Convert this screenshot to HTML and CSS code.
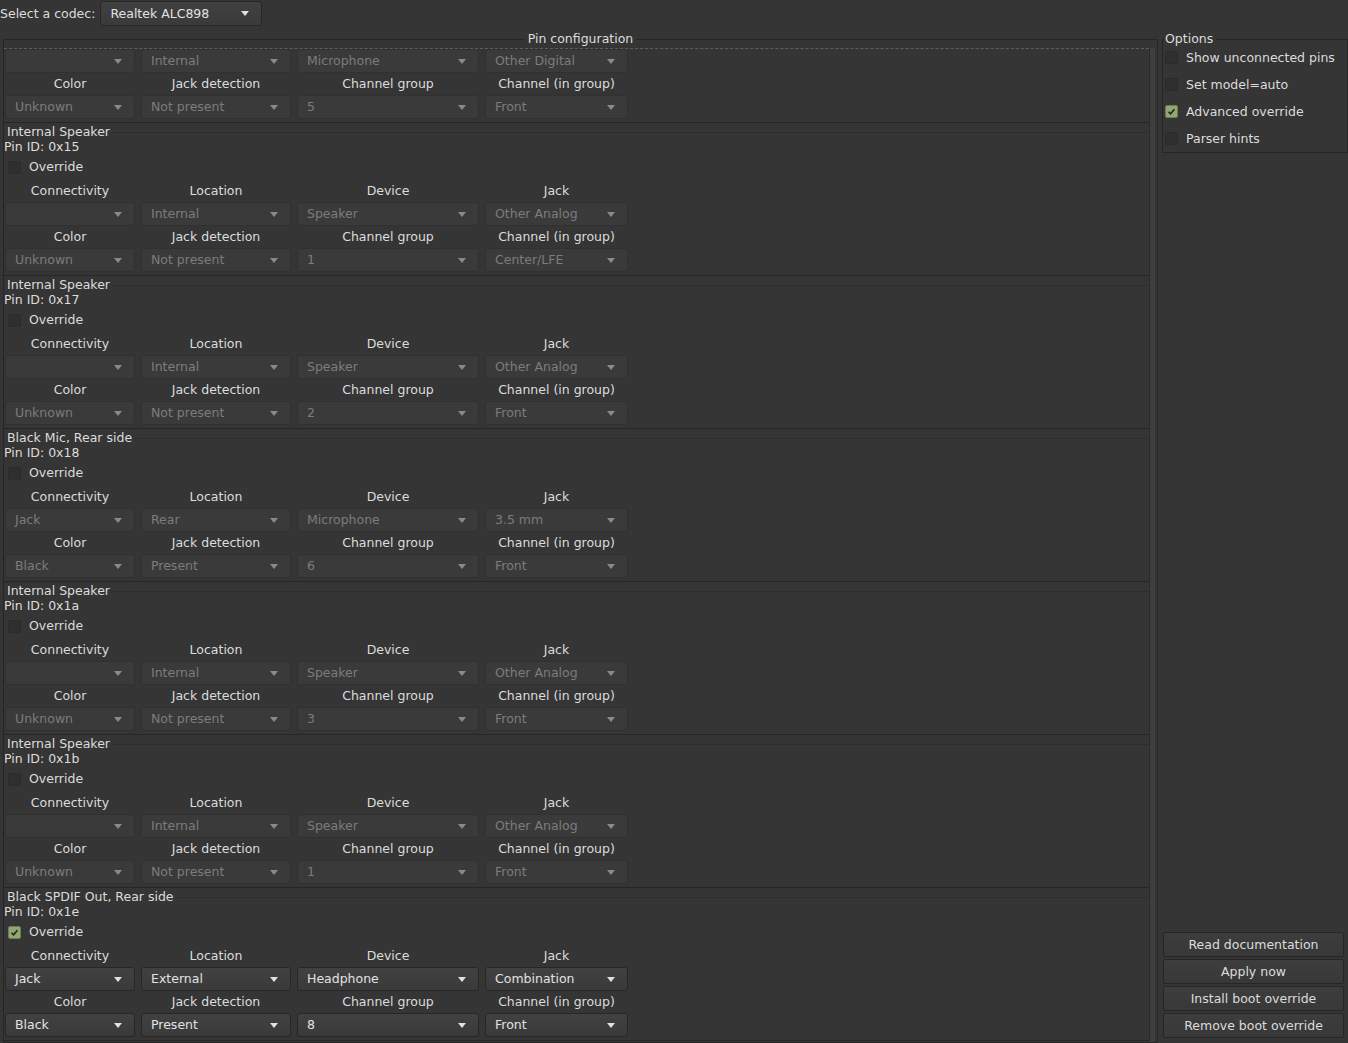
FILE: index.html
```html
<!DOCTYPE html>
<html>
<head>
<meta charset="utf-8">
<title>Pin configuration</title>
<link rel="stylesheet" href="styles.css">
</head>
<body>
<div class="topbar">
  <span class="codec-label">Select a codec:</span>
  <div class="combo combo-codec"><span>Realtek ALC898</span><i class="arrow"></i></div>
</div>
<div class="main">
  <div class="pins">
    <div class="group-title">
      <span class="gl gl-left"></span><span class="gt">Pin configuration</span><span class="gl gl-right"></span>
    </div>
    <div class="group-body">
      <div class="viewport">
        <div class="content">

          <section class="pin partial disabled">
            <div class="grid grid-partial">
              <div class="combo"><span></span><i class="arrow"></i></div>
              <div class="combo"><span>Internal</span><i class="arrow"></i></div>
              <div class="combo"><span>Microphone</span><i class="arrow"></i></div>
              <div class="combo"><span>Other Digital</span><i class="arrow"></i></div>
              <div class="lbl">Color</div><div class="lbl">Jack detection</div><div class="lbl">Channel group</div><div class="lbl">Channel (in group)</div>
              <div class="combo"><span>Unknown</span><i class="arrow"></i></div>
              <div class="combo"><span>Not present</span><i class="arrow"></i></div>
              <div class="combo"><span>5</span><i class="arrow"></i></div>
              <div class="combo"><span>Front</span><i class="arrow"></i></div>
            </div>
          </section>

          <section class="pin disabled">
            <div class="pin-head"><span class="pin-title">Internal Speaker</span><span class="pin-line"></span></div>
            <div class="pin-id">Pin ID: 0x15</div>
            <div class="check"><span class="box"></span>Override</div>
            <div class="grid">
              <div class="lbl top">Connectivity</div><div class="lbl top">Location</div><div class="lbl top">Device</div><div class="lbl top">Jack</div>
              <div class="combo"><span></span><i class="arrow"></i></div>
              <div class="combo"><span>Internal</span><i class="arrow"></i></div>
              <div class="combo"><span>Speaker</span><i class="arrow"></i></div>
              <div class="combo"><span>Other Analog</span><i class="arrow"></i></div>
              <div class="lbl">Color</div><div class="lbl">Jack detection</div><div class="lbl">Channel group</div><div class="lbl">Channel (in group)</div>
              <div class="combo"><span>Unknown</span><i class="arrow"></i></div>
              <div class="combo"><span>Not present</span><i class="arrow"></i></div>
              <div class="combo"><span>1</span><i class="arrow"></i></div>
              <div class="combo"><span>Center/LFE</span><i class="arrow"></i></div>
            </div>
          </section>

          <section class="pin disabled">
            <div class="pin-head"><span class="pin-title">Internal Speaker</span><span class="pin-line"></span></div>
            <div class="pin-id">Pin ID: 0x17</div>
            <div class="check"><span class="box"></span>Override</div>
            <div class="grid">
              <div class="lbl top">Connectivity</div><div class="lbl top">Location</div><div class="lbl top">Device</div><div class="lbl top">Jack</div>
              <div class="combo"><span></span><i class="arrow"></i></div>
              <div class="combo"><span>Internal</span><i class="arrow"></i></div>
              <div class="combo"><span>Speaker</span><i class="arrow"></i></div>
              <div class="combo"><span>Other Analog</span><i class="arrow"></i></div>
              <div class="lbl">Color</div><div class="lbl">Jack detection</div><div class="lbl">Channel group</div><div class="lbl">Channel (in group)</div>
              <div class="combo"><span>Unknown</span><i class="arrow"></i></div>
              <div class="combo"><span>Not present</span><i class="arrow"></i></div>
              <div class="combo"><span>2</span><i class="arrow"></i></div>
              <div class="combo"><span>Front</span><i class="arrow"></i></div>
            </div>
          </section>

          <section class="pin disabled">
            <div class="pin-head"><span class="pin-title">Black Mic, Rear side</span><span class="pin-line"></span></div>
            <div class="pin-id">Pin ID: 0x18</div>
            <div class="check"><span class="box"></span>Override</div>
            <div class="grid">
              <div class="lbl top">Connectivity</div><div class="lbl top">Location</div><div class="lbl top">Device</div><div class="lbl top">Jack</div>
              <div class="combo"><span>Jack</span><i class="arrow"></i></div>
              <div class="combo"><span>Rear</span><i class="arrow"></i></div>
              <div class="combo"><span>Microphone</span><i class="arrow"></i></div>
              <div class="combo"><span>3.5 mm</span><i class="arrow"></i></div>
              <div class="lbl">Color</div><div class="lbl">Jack detection</div><div class="lbl">Channel group</div><div class="lbl">Channel (in group)</div>
              <div class="combo"><span>Black</span><i class="arrow"></i></div>
              <div class="combo"><span>Present</span><i class="arrow"></i></div>
              <div class="combo"><span>6</span><i class="arrow"></i></div>
              <div class="combo"><span>Front</span><i class="arrow"></i></div>
            </div>
          </section>

          <section class="pin disabled">
            <div class="pin-head"><span class="pin-title">Internal Speaker</span><span class="pin-line"></span></div>
            <div class="pin-id">Pin ID: 0x1a</div>
            <div class="check"><span class="box"></span>Override</div>
            <div class="grid">
              <div class="lbl top">Connectivity</div><div class="lbl top">Location</div><div class="lbl top">Device</div><div class="lbl top">Jack</div>
              <div class="combo"><span></span><i class="arrow"></i></div>
              <div class="combo"><span>Internal</span><i class="arrow"></i></div>
              <div class="combo"><span>Speaker</span><i class="arrow"></i></div>
              <div class="combo"><span>Other Analog</span><i class="arrow"></i></div>
              <div class="lbl">Color</div><div class="lbl">Jack detection</div><div class="lbl">Channel group</div><div class="lbl">Channel (in group)</div>
              <div class="combo"><span>Unknown</span><i class="arrow"></i></div>
              <div class="combo"><span>Not present</span><i class="arrow"></i></div>
              <div class="combo"><span>3</span><i class="arrow"></i></div>
              <div class="combo"><span>Front</span><i class="arrow"></i></div>
            </div>
          </section>

          <section class="pin disabled">
            <div class="pin-head"><span class="pin-title">Internal Speaker</span><span class="pin-line"></span></div>
            <div class="pin-id">Pin ID: 0x1b</div>
            <div class="check"><span class="box"></span>Override</div>
            <div class="grid">
              <div class="lbl top">Connectivity</div><div class="lbl top">Location</div><div class="lbl top">Device</div><div class="lbl top">Jack</div>
              <div class="combo"><span></span><i class="arrow"></i></div>
              <div class="combo"><span>Internal</span><i class="arrow"></i></div>
              <div class="combo"><span>Speaker</span><i class="arrow"></i></div>
              <div class="combo"><span>Other Analog</span><i class="arrow"></i></div>
              <div class="lbl">Color</div><div class="lbl">Jack detection</div><div class="lbl">Channel group</div><div class="lbl">Channel (in group)</div>
              <div class="combo"><span>Unknown</span><i class="arrow"></i></div>
              <div class="combo"><span>Not present</span><i class="arrow"></i></div>
              <div class="combo"><span>1</span><i class="arrow"></i></div>
              <div class="combo"><span>Front</span><i class="arrow"></i></div>
            </div>
          </section>

          <section class="pin">
            <div class="pin-head"><span class="pin-title">Black SPDIF Out, Rear side</span><span class="pin-line"></span></div>
            <div class="pin-id">Pin ID: 0x1e</div>
            <div class="check"><span class="box checked"><svg viewBox="0 0 13 13" width="13" height="13"><path d="M3 6.8 L5.4 9.2 L10 3.8" fill="none" stroke="#1c2614" stroke-width="1.8"/></svg></span>Override</div>
            <div class="grid">
              <div class="lbl top">Connectivity</div><div class="lbl top">Location</div><div class="lbl top">Device</div><div class="lbl top">Jack</div>
              <div class="combo"><span>Jack</span><i class="arrow"></i></div>
              <div class="combo"><span>External</span><i class="arrow"></i></div>
              <div class="combo"><span>Headphone</span><i class="arrow"></i></div>
              <div class="combo"><span>Combination</span><i class="arrow"></i></div>
              <div class="lbl">Color</div><div class="lbl">Jack detection</div><div class="lbl">Channel group</div><div class="lbl">Channel (in group)</div>
              <div class="combo"><span>Black</span><i class="arrow"></i></div>
              <div class="combo"><span>Present</span><i class="arrow"></i></div>
              <div class="combo"><span>8</span><i class="arrow"></i></div>
              <div class="combo"><span>Front</span><i class="arrow"></i></div>
            </div>
          </section>

        </div>
      </div>
      <div class="vbar"></div>
    </div>
  </div>

  <div class="side">
    <div class="options">
      <div class="group-title">
        <span class="gl gl-left gl-stub"></span><span class="gt gt-left">Options</span><span class="gl gl-right"></span>
      </div>
      <div class="options-body">
        <div class="check opt"><span class="box"></span>Show unconnected pins</div>
        <div class="check opt"><span class="box"></span>Set model=auto</div>
        <div class="check opt"><span class="box checked"><svg viewBox="0 0 13 13" width="13" height="13"><path d="M3 6.8 L5.4 9.2 L10 3.8" fill="none" stroke="#1c2614" stroke-width="1.8"/></svg></span>Advanced override</div>
        <div class="check opt"><span class="box"></span>Parser hints</div>
      </div>
    </div>
    <div class="buttons">
      <div class="btn">Read documentation</div>
      <div class="btn">Apply now</div>
      <div class="btn">Install boot override</div>
      <div class="btn">Remove boot override</div>
    </div>
  </div>
</div>
</body>
</html>
```

FILE: styles.css
```css
html, body {
  margin: 0;
  padding: 0;
}
body {
  width: 1348px;
  height: 1043px;
  overflow: hidden;
  background: #353535;
  color: #dcdcdc;
  font-family: "DejaVu Sans", "Liberation Sans", sans-serif;
  font-size: 12.5px;
  line-height: 15px;
}

/* ---------- top bar ---------- */
.topbar {
  display: flex;
  align-items: center;
  gap: 5px;
  height: 25px;
  padding-top: 1px;
}
.combo-codec {
  width: 162px;
  height: 25px;
  color: #dcdcdc;
}

/* ---------- combo boxes ---------- */
.combo {
  box-sizing: border-box;
  display: flex;
  align-items: center;
  justify-content: space-between;
  padding: 0 12px 1px 9px;
  background: linear-gradient(#414141, #3a3a3a);
  border: 1px solid #272727;
  border-radius: 3px;
  color: #e2e2e2;
  white-space: nowrap;
}
.arrow {
  display: block;
  width: 0;
  height: 0;
  margin-top: 1px;
  border-left: 4.5px solid transparent;
  border-right: 4.5px solid transparent;
  border-top: 5px solid #e0e0e0;
}
.disabled .combo {
  background: #3a3a3a;
  border-color: #313131;
  color: #7c7c7c;
}
.disabled .arrow {
  border-top-color: #8a8a8a;
}

/* ---------- layout ---------- */
.main {
  display: flex;
  gap: 4px;
  padding-left: 3px;
  margin-top: 5px;
  height: 1012px;
}

.group-title {
  display: flex;
  height: 17px;
}
.gl {
  flex: 1;
  align-self: flex-end;
  height: 8px;
  border-top: 1px solid #262626;
}
.gl-left {
  border-left: 1px solid #262626;
}
.gl-right {
  border-right: 1px solid #262626;
}
.gt {
  padding: 0 3px;
  color: #dcdcdc;
}

.pins {
  width: 1155px;
  display: flex;
  flex-direction: column;
}
.group-body {
  flex: 1;
  display: flex;
  min-height: 0;
  border: 1px solid #262626;
  border-top: none;
}
.viewport {
  flex: 1;
  overflow: hidden;
  border-top: 1px dashed #5e5e5e;
}
.vbar {
  width: 5px;
  margin-right: 2px;
  background: #3e3e3e;
  border-left: 1px solid #2c2c2c;
}

/* ---------- pin sections ---------- */
.pin {
  height: 152px;
  border-bottom: 1px solid #262626;
  display: flex;
  flex-direction: column;
}
.pin.partial {
  height: 73px;
}
.pin-head {
  display: flex;
  height: 16px;
}
.pin-title {
  padding-left: 3px;
  padding-top: 1px;
  line-height: 16px;
}
.pin-line {
  flex: 1;
  margin-top: 9px;
  margin-left: 2px;
  border-top: 1px solid #2d2d2d;
  height: 0;
}
.pin-id {
  height: 15px;
  line-height: 15px;
}
.check {
  display: flex;
  align-items: center;
  height: 24px;
  padding-left: 4px;
}
.box {
  box-sizing: border-box;
  width: 13px;
  height: 13px;
  margin-right: 8px;
  margin-top: 2px;
  background: #2f2f2f;
  border: 1px solid #2b2b2b;
  border-radius: 2px;
  display: flex;
  align-items: center;
  justify-content: center;
}
.box svg {
  display: block;
}
.box.checked {
  background: #93a573;
  border-color: #6d7d54;
}

.grid {
  display: grid;
  grid-template-columns: 130px 150px 182px 143px;
  grid-template-rows: 24px 24px 22px 24px;
  column-gap: 6px;
  margin-left: 1px;
}
.grid-partial {
  grid-template-rows: 24px 22px 24px;
}
.lbl {
  display: flex;
  align-items: center;
  justify-content: center;
  padding-bottom: 1px;
  color: #dcdcdc;
}
.lbl.top {
  padding-bottom: 0;
}

/* ---------- side column ---------- */
.side {
  width: 186px;
  display: flex;
  flex-direction: column;
  justify-content: space-between;
  padding-bottom: 5px;
}
.gl-stub {
  flex: 0 0 1px;
}
.gt-left {
  padding-left: 1px;
}
.options-body {
  display: flex;
  flex-direction: column;
  gap: 9px;
  padding: 0 0 5px 2px;
  border: 1px solid #262626;
  border-top: none;
}
.check.opt {
  height: 18px;
  padding-left: 0;
}
.check.opt .box {
  margin-right: 8px;
  margin-top: 0;
}
.buttons {
  display: flex;
  flex-direction: column;
  gap: 2px;
  margin-left: 1px;
  width: 181px;
}
.btn {
  box-sizing: border-box;
  height: 25px;
  display: flex;
  align-items: center;
  justify-content: center;
  background: linear-gradient(#3d3d3d, #383838);
  border: 1px solid #262626;
  border-radius: 2px;
  color: #dcdcdc;
}
```
